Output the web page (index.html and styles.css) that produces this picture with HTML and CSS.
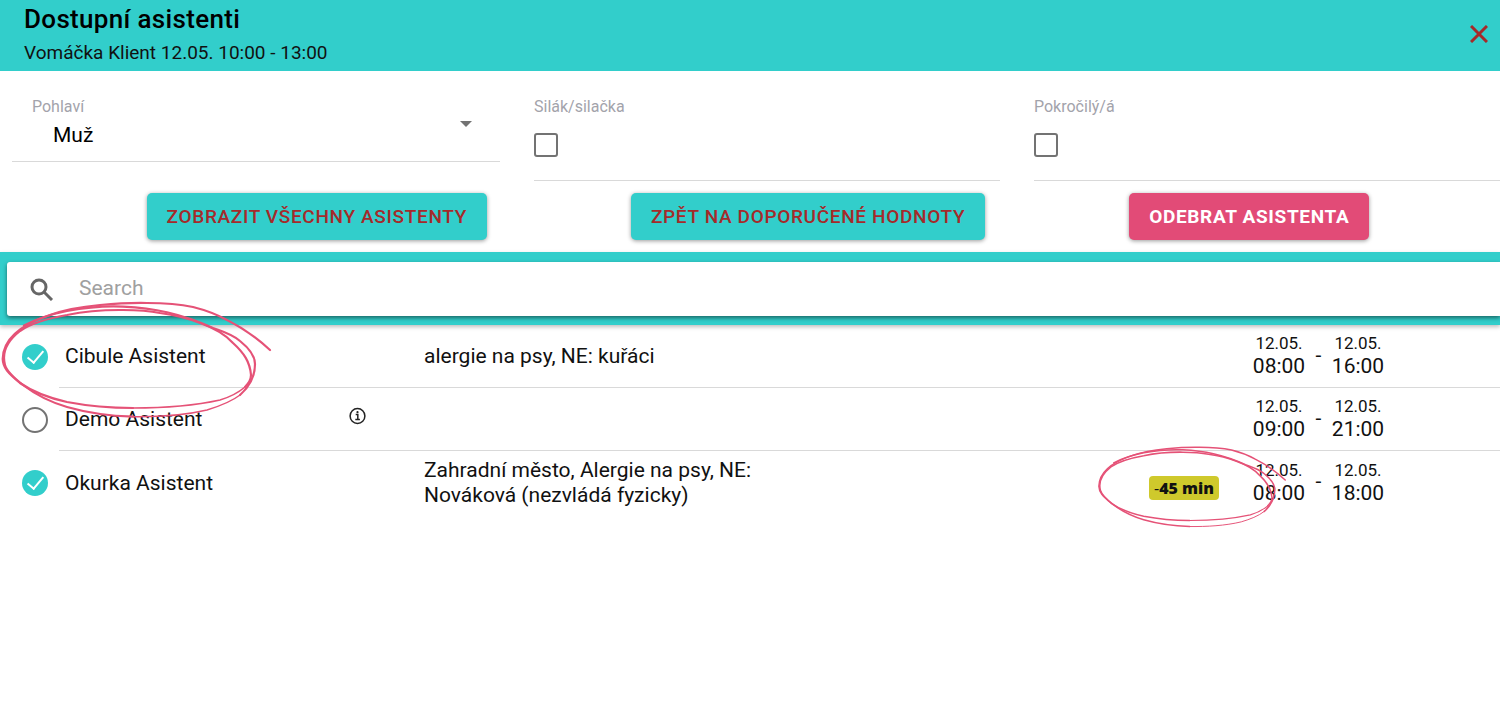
FILE: index.html
```html
<!DOCTYPE html>
<html lang="cs">
<head>
  <meta charset="UTF-8">
  <meta name="viewport" content="width=device-width, initial-scale=1">
  <title>Dostupní asistenti</title>
  <link rel="stylesheet" href="styles.css">
</head>
<body>
  <svg width="0" height="0" class="sprite" aria-hidden="true">
    <symbol id="scribble" viewBox="0 0 274 120">
      <path d="M24 25.500C38 18 52 14 67 11C86 7.500 105 5.800 123 6.700C138 7.500 152 9 167 12.300C183 16 198 21 213 28C224 32 232 34 240 41C250 49 255 56 255 64C255 76 249 87 240 95" stroke-width="2.2"/>
      <path d="M240 95C231 102 220 106 207 110C184 115.500 158 117 133 116.700" stroke-width="1.4"/>
      <path d="M133 116.700C110 116 88 113 67 107C50 102 36 95 23 85C14 78 7 72 5 65C2 54 6 42 20 31C33 22 50 18 67 15C86 11 105 9.800 123 10C136 10 148 10.500 160 13C174 15 187 18 200 23C214 28 225 34 233 43C244 53 250 62 251 75C251 79 249 83 245 87" stroke-width="2.2"/>
      <path d="M245 87C238 93 230 97 220 100C193 106 163 108 133 108" stroke-width="1.6"/>
      <path d="M133 108C110 108 88 106 67 102C49 98 33 92 20 83C8 73 3 68 2.700 59C3 38 23 24 50 15C66 9 83 6.500 100 5C116 3.500 131 2.700 147 3C163 3 179 4 193 7C205 10 216 14 227 20C243 28 257 38 270 50" stroke-width="2.2"/>
    </symbol>
  </svg>

  <header class="header">
    <div>
      <h1>Dostupní asistenti</h1>
      <p>Vomáčka Klient 12.05. 10:00 - 13:00</p>
    </div>
    <button class="close" aria-label="Zavřít">
      <svg width="18" height="18" viewBox="0 0 18 18"><path d="M1 1L17 17M17 1L1 17"/></svg>
    </button>
  </header>

  <main>
    <section class="filters">
      <div class="field field-select">
        <label for="gender">Pohlaví</label>
        <select id="gender">
          <option>Muž</option>
          <option>Žena</option>
        </select>
        <svg class="arrow" width="12" height="6" viewBox="0 0 12 6"><path d="M0 0H12L6 6Z"/></svg>
      </div>
      <div class="field">
        <label for="strong">Silák/silačka</label>
        <input type="checkbox" id="strong">
      </div>
      <div class="field">
        <label for="advanced">Pokročilý/á</label>
        <input type="checkbox" id="advanced">
      </div>
    </section>

    <div class="buttons">
      <button class="btn">Zobrazit všechny asistenty</button>
      <button class="btn">Zpět na doporučené hodnoty</button>
      <button class="btn btn-danger">Odebrat asistenta</button>
    </div>

    <div class="toolbar">
      <div class="search">
        <svg width="24" height="24" viewBox="0 0 24 24"><circle cx="9" cy="10" r="7"/><path d="M14 15L22 23"/></svg>
        <input type="text" placeholder="Search" aria-label="Search">
      </div>
    </div>

    <ul class="list">
      <li>
        <input type="checkbox" id="a1" checked>
        <div class="row">
          <label for="a1">Cibule Asistent</label>
          <span></span>
          <p>alergie na psy, NE: kuřáci</p>
          <span></span>
          <div class="times">
            <time><small>12.05.</small>08:00</time>
            <span>-</span>
            <time><small>12.05.</small>16:00</time>
          </div>
        </div>
        <svg class="mark mark-name"><use href="#scribble"/></svg>
      </li>
      <li>
        <input type="checkbox" id="a2">
        <div class="row">
          <label for="a2">Demo Asistent</label>
          <svg class="info" width="18" height="18" viewBox="0 0 18 18"><circle cx="8.5" cy="9" r="7.4"/><path d="M6.7 7.6H8.8V12.6M6.3 12.6H10.9"/><circle class="dot" cx="8.5" cy="5.2" r="1.1"/></svg>
          <p></p>
          <span></span>
          <div class="times">
            <time><small>12.05.</small>09:00</time>
            <span>-</span>
            <time><small>12.05.</small>21:00</time>
          </div>
        </div>
      </li>
      <li>
        <input type="checkbox" id="a3" checked>
        <div class="row">
          <label for="a3">Okurka Asistent</label>
          <span></span>
          <p>Zahradní město, Alergie na psy, NE: Nováková (nezvládá fyzicky)</p>
          <span class="badge"><span>-</span>45 min<svg class="mark mark-badge"><use href="#scribble"/></svg></span>
          <div class="times">
            <time><small>12.05.</small>08:00</time>
            <span>-</span>
            <time><small>12.05.</small>18:00</time>
          </div>
        </div>
      </li>
    </ul>
  </main>
</body>
</html>
```
FILE: styles.css
```css
:root {
  --teal: #32cecb;
  --pink: #e24b77;
  --red: #a52a2a;
  --line: #d9d9d9;
  --grey: #737373;
}

* {
  box-sizing: border-box;
}

body {
  margin: 0;
  min-height: 100vh;
  background: #fff;
  color: #111;
  font-family: Roboto, "Liberation Sans", sans-serif;
  font-size: 21px;
  line-height: 25px;
}

h1, p, ul {
  margin: 0;
  padding: 0;
}

button, input, select {
  font-family: inherit;
  margin: 0;
}

.sprite {
  position: absolute;
}

.header {
  display: flex;
  justify-content: space-between;
  align-items: center;
  padding: 4px 10px 6px 24px;
  background: var(--teal);
}

.header h1 {
  font-size: 26px;
  line-height: 31px;
  font-weight: 500;
  letter-spacing: 0.0125em;
  color: #000;
}

.header p {
  margin-top: 6px;
  font-size: 19px;
  line-height: 24px;
}

.close {
  display: flex;
  margin-bottom: 2px;
  padding: 2px;
  border: none;
  background: none;
  cursor: pointer;
}

.close path {
  stroke: var(--red);
  stroke-width: 3;
}

.filters {
  display: grid;
  grid-template-columns: repeat(3, 1fr);
  align-items: start;
  padding-top: 26px;
}

.field {
  display: flex;
  flex-direction: column;
  align-items: flex-start;
  margin-left: 34px;
  padding-bottom: 23px;
  border-bottom: 1px solid var(--line);
}

.field label {
  font-size: 16px;
  line-height: 20px;
  color: #a3a3ab;
}

.field input {
  margin-top: 16px;
}

.field-select {
  position: relative;
  margin-left: 12px;
  padding-bottom: 9px;
}

.field-select label {
  margin-left: 20px;
}

.field select {
  width: 100%;
  height: 35px;
  padding: 0 40px 0 41px;
  border: none;
  background: none;
  font-size: 21px;
  color: #000;
  appearance: none;
  outline: none;
}

.arrow {
  position: absolute;
  right: 28px;
  top: 24px;
  fill: var(--grey);
  pointer-events: none;
}

input[type="checkbox"] {
  flex: none;
  width: 24px;
  height: 24px;
  border: 2px solid var(--grey);
  border-radius: 3px;
  background: #fff;
  appearance: none;
  cursor: pointer;
}

.buttons {
  display: flex;
  justify-content: center;
  gap: 144px;
  padding: 12px 0 12px 16px;
}

.btn {
  height: 47px;
  padding: 0 20px;
  border: none;
  border-radius: 5px;
  background: var(--teal);
  color: var(--red);
  font-size: 19px;
  font-weight: 500;
  letter-spacing: 0.035em;
  text-transform: uppercase;
  white-space: nowrap;
  box-shadow: 0 1px 4px rgba(0, 0, 0, 0.4);
  cursor: pointer;
}

.btn-danger {
  background: var(--pink);
  color: #fff;
  font-weight: 700;
}

.toolbar {
  padding: 10px 0 9px 7px;
  background: var(--teal);
  box-shadow: 0 2px 4px rgba(0, 0, 0, 0.25);
}

.search {
  display: flex;
  align-items: center;
  gap: 25px;
  height: 54px;
  padding-left: 23px;
  border-radius: 3px 0 0 3px;
  background: #fff;
  box-shadow: 0 2px 4px rgba(0, 0, 0, 0.5);
}

.search svg {
  fill: none;
  stroke: #666;
  stroke-width: 3;
}

.search input {
  flex: 1;
  height: 50px;
  padding: 0 0 2px;
  border: none;
  outline: none;
  background: none;
  font-size: 21px;
}

.search input::placeholder {
  color: #a0a0a0;
}

.list {
  list-style: none;
}

.list li {
  position: relative;
  display: flex;
  align-items: center;
  padding-left: 22px;
}

.list input {
  width: 26px;
  height: 26px;
  border-radius: 50%;
}

.list input:checked {
  display: grid;
  place-items: center;
  border: none;
  background: var(--teal);
}

/* check mark */
.list input:checked::before {
  content: "";
  width: 7px;
  height: 14px;
  margin-bottom: 4px;
  border: solid #fff;
  border-width: 0 2px 2px 0;
  transform: rotate(40deg);
}

.row {
  flex: 1;
  display: grid;
  grid-template-columns: 284fr 75fr 400fr 426fr 250fr;
  align-items: center;
  min-height: 63px;
  margin-left: 11px;
  padding-left: 6px;
  border-bottom: 1px solid var(--line);
}

.row label,
.row p {
  padding-top: 1px;
}

.list li:last-child .row {
  border-bottom: none;
}

.info {
  margin-bottom: 6px;
  fill: none;
  stroke: #222;
  stroke-width: 1.5;
}

.info .dot {
  fill: #222;
  stroke: none;
}

.times {
  display: flex;
  align-items: center;
}

.times time {
  width: 58px;
  text-align: center;
}

.times small {
  display: block;
  font-size: 17px;
  line-height: 21px;
}

.times > span {
  width: 21px;
  margin-bottom: 2px;
  text-align: center;
}

.badge {
  position: relative;
  justify-self: end;
  margin: 10px 31px 0 0;
  padding: 0 5px;
  border-radius: 4px;
  background: #cfc92c;
  font-family: "Open Sans", "Noto Sans", sans-serif;
  font-size: 16px;
  line-height: 24px;
  font-weight: 800;
}

.badge span {
  font-weight: 400;
}

/* hand-drawn highlight */
.mark {
  position: absolute;
  z-index: 1;
  fill: none;
  stroke: #e55277;
  stroke-linecap: round;
  pointer-events: none;
}

.mark-name {
  left: 0;
  top: -25px;
  width: 274px;
  height: 120px;
}

.mark-badge {
  left: -52px;
  top: -31px;
  width: 191px;
  height: 84px;
}
```
